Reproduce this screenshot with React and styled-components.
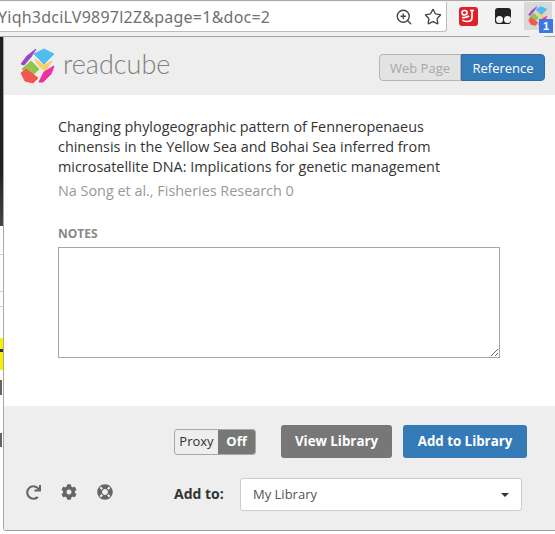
import styled, { createGlobalStyle } from "styled-components";
import { ZoomIn, Star } from "lucide-react";
import { FaRedo, FaCog, FaLifeRing } from "react-icons/fa";

const GlobalStyle = createGlobalStyle`
  html, body {
    margin: 0;
    padding: 0;
    background: #ffffff;
    overflow: hidden;
  }
  * {
    box-sizing: border-box;
  }
`;

function Logo({ size = 36 }) {
  return (
    <svg width={size} height={size} viewBox="0 0 36 36">
      <g strokeLinejoin="round" strokeWidth="1">
        <polygon points="1,16 7,8 16,1 11,9 4,17" fill="#9b45c6" stroke="#9b45c6" />
        <polygon points="14,6 24,1 34,6 24,16" fill="#4fbdf0" stroke="#4fbdf0" />
        <polygon points="15,11 24,17 32,13 25,23 18,17" fill="#f8d06a" stroke="#f8d06a" />
        <polygon points="2,21 11,13 19,21 11,29" fill="#93c452" stroke="#93c452" />
        <polygon points="1,25 6,21 18,30 13,35 5,33" fill="#f4574f" stroke="#f4574f" />
        <polygon points="19,34 24,24 34,18 31,26 23,34" fill="#ee2fa0" stroke="#ee2fa0" />
      </g>
    </svg>
  );
}

export default function App() {
  return (
    <Page>
      <GlobalStyle />
      <ChromeBar>
        <Omnibox>
          <Url>Yiqh3dciLV9897l2Z&amp;page=1&amp;doc=2</Url>
          <OmniIcons>
            <ZoomIn size={18} strokeWidth={1.8} />
            <Star size={18} strokeWidth={1.8} />
          </OmniIcons>
        </Omnibox>
        <Extensions>
          <Ext>
            <RedBadge>
              <svg width="16" height="16" viewBox="0 0 16 16" fill="none" stroke="#fff" strokeWidth="1.7">
                <path d="M2 4.5c0-1.5 1-2 2.5-2S7 3.2 7 4.6 6 7 4.4 7 2 6 2 4.5z" />
                <path d="M2 9.5c3 .5 5 0 7-1.500M10 2.500h4M12 2.500v7c0 2.500-2 4-5 4-2 0-3.500-.5-4.500-1.500" />
              </svg>
            </RedBadge>
          </Ext>
          <Ext>
            <BlackBadge>
              <Dot />
              <Dot />
            </BlackBadge>
          </Ext>
          <Ext $active>
            <Logo size={20} />
            <Count>1</Count>
          </Ext>
        </Extensions>
        <Notch />
      </ChromeBar>

      <Below>
        <Backdrop>
          <DarkBlock />
          <Rule $h={29} />
          <Rule $h={37} />
          <Rule $h={15} />
          <Rule $h={31} $plain />
          <Marker />
          <Rule $h={10} $plain />
          <Ink $h={15} />
          <Rule $h={38} $plain />
          <Ink $h={14} />
        </Backdrop>

        <Popup>
          <Header>
            <Brand>
              <Logo size={36} />
              <Wordmark>readcube</Wordmark>
            </Brand>
            <Segmented>
              <Segment>Web Page</Segment>
              <Segment $on>Reference</Segment>
            </Segmented>
          </Header>

          <Body>
            <Title>
              Changing phylogeographic pattern of Fenneropenaeus
              <br />
              chinensis in the Yellow Sea and Bohai Sea inferred from
              <br />
              microsatellite DNA: Implications for genetic management
            </Title>
            <Authors>Na Song et al., Fisheries Research 0</Authors>
            <NotesLabel>NOTES</NotesLabel>
            <Notes />
          </Body>

          <Footer>
            <ActionRow>
              <Proxy>
                <ProxyLabel>Proxy</ProxyLabel>
                <ProxyState>Off</ProxyState>
              </Proxy>
              <Button $tone="#777777" $w={111}>View Library</Button>
              <Button $tone="#337ab7" $w={124}>Add to Library</Button>
            </ActionRow>
            <BottomRow>
              <Tools>
                <FaRedo size={15} />
                <FaCog size={16} />
                <FaLifeRing size={16} />
              </Tools>
              <AddTo>Add to:</AddTo>
              <Select>
                My Library
                <Caret />
              </Select>
            </BottomRow>
          </Footer>
        </Popup>
      </Below>
    </Page>
  );
}

const Page = styled.div`
  width: 555px;
  height: 534px;
  display: flex;
  flex-direction: column;
  font-family: "Open Sans", "Liberation Sans", sans-serif;
  overflow: hidden;
`;

const ChromeBar = styled.div`
  position: relative;
  height: 37px;
  flex: none;
  display: flex;
  padding-top: 1px;
  background: #f2f2f2;
  border-top: 1px solid #a9a9a9;
  border-bottom: 1px solid #a5a5a5;
`;

const Omnibox = styled.div`
  width: 447px;
  height: 30px;
  flex: none;
  display: flex;
  align-items: center;
  justify-content: space-between;
  background: #ffffff;
  border: 1px solid #bdbdbd;
  border-left: none;
  border-top: none;
  border-radius: 0 0 3px 0;
`;

const Url = styled.span`
  margin-left: -2px;
  font-family: "Noto Sans", sans-serif;
  font-size: 16px;
  letter-spacing: 0.23px;
  color: #707070;
  white-space: nowrap;
`;

const OmniIcons = styled.div`
  display: flex;
  gap: 11px;
  padding-right: 4px;
  color: #444444;
`;

const Extensions = styled.div`
  display: flex;
  gap: 7px;
  padding: 0 1px 0 7px;
`;

const Ext = styled.div`
  position: relative;
  width: 28px;
  height: 28px;
  display: flex;
  align-items: center;
  justify-content: center;
  background: ${(p) => (p.$active ? "#d9d9d9" : "transparent")};
`;

const RedBadge = styled.div`
  width: 19px;
  height: 19px;
  display: flex;
  align-items: center;
  justify-content: center;
  border-radius: 3px;
  background: #e0202a;
`;

const BlackBadge = styled.div`
  width: 16px;
  height: 16px;
  display: flex;
  align-items: flex-end;
  justify-content: center;
  gap: 1px;
  padding-bottom: 1px;
  border-radius: 3px;
  background: #222222;
`;

const Dot = styled.span`
  width: 7px;
  height: 7px;
  border-radius: 50%;
  background: #f4f4f4;
`;

const Count = styled.span`
  position: absolute;
  right: -1px;
  bottom: -3px;
  width: 14px;
  height: 14px;
  font: bold 11px/14px "Liberation Sans", sans-serif;
  text-align: center;
  color: #ffffff;
  background: #3c78e0;
`;

const Notch = styled.span`
  position: absolute;
  right: 10px;
  bottom: -1px;
  width: 0;
  height: 0;
  border-left: 8px solid transparent;
  border-right: 8px solid transparent;
  border-bottom: 6px solid #eeeeee;
`;

const Below = styled.div`
  flex: 1;
  display: flex;
  min-height: 0;
`;

const Backdrop = styled.div`
  width: 3px;
  flex: none;
  display: flex;
  flex-direction: column;
  background: #ffffff;
`;

const DarkBlock = styled.div`
  height: 189px;
  background: linear-gradient(#1f1f1f, #1f1f1f 70%, #454545);
`;

const Rule = styled.div`
  height: ${(p) => p.$h}px;
  border-bottom: ${(p) => (p.$plain ? "none" : "1px solid #d0d0d0")};
`;

const Marker = styled.div`
  height: 32px;
  background: linear-gradient(#f7f000 35%, #333333 35%, #333333 45%, #f7f000 45%);
`;

const Ink = styled.div`
  width: 2px;
  height: ${(p) => p.$h}px;
  background: #6a625c;
`;

const Popup = styled.div`
  width: 552px;
  height: 494px;
  flex: none;
  display: flex;
  flex-direction: column;
  border-left: 1px solid #a8a8a8;
  border-bottom: 1px solid #9a9a9a;
  border-radius: 0 0 0 3px;
  background: #eeeeee;
`;

const Header = styled.div`
  height: 58px;
  flex: none;
  display: flex;
  align-items: center;
  justify-content: space-between;
  padding: 0 10px 0 16px;
  background: #eeeeee;
`;

const Brand = styled.div`
  display: flex;
  align-items: center;
  gap: 7px;
`;

const Wordmark = styled.span`
  margin-top: -5px;
  font-family: "Lato", sans-serif;
  font-weight: 300;
  font-size: 27px;
  line-height: 1;
  color: #808080;
`;

const Segmented = styled.div`
  display: flex;
  height: 27px;
  margin-top: 3px;
`;

const Segment = styled.div`
  width: ${(p) => (p.$on ? 84 : 82)}px;
  display: flex;
  align-items: center;
  justify-content: center;
  font-size: 13px;
  color: ${(p) => (p.$on ? "#ffffff" : "#a8a8a8")};
  background: ${(p) => (p.$on ? "#337ab7" : "#e3e3e3")};
  border: 1px solid ${(p) => (p.$on ? "#2e6da4" : "#b5b5b5")};
  border-radius: ${(p) => (p.$on ? "0 4px 4px 0" : "4px 0 0 4px")};
`;

const Body = styled.div`
  height: 311px;
  flex: none;
  padding: 22px 54px 0 54px;
  background: #ffffff;
`;

const Title = styled.div`
  font-size: 14.4px;
  line-height: 20px;
  color: #333333;
  white-space: nowrap;
`;

const Authors = styled.div`
  margin-top: 4px;
  font-size: 14.4px;
  line-height: 20px;
  color: #999999;
`;

const NotesLabel = styled.div`
  margin-top: 23px;
  font-size: 12px;
  font-weight: 700;
  line-height: 20px;
  color: #888888;
`;

const Notes = styled.textarea`
  display: block;
  width: 442px;
  height: 111px;
  margin-top: 3px;
  border: 1px solid #a6a6a6;
  border-radius: 0;
  background: #ffffff;
  outline: none;
`;

const Footer = styled.div`
  flex: 1;
  display: flex;
  flex-direction: column;
  background: #eeeeee;
`;

const ActionRow = styled.div`
  display: flex;
  align-items: center;
  height: 33px;
  margin-top: 19px;
  padding-left: 170px;
`;

const Proxy = styled.div`
  display: flex;
  width: 82px;
  height: 26px;
  margin-right: 25px;
  border: 1px solid #a8a8a8;
  border-radius: 3px;
  overflow: hidden;
  font-size: 13px;
  line-height: 23px;
`;

const ProxyLabel = styled.span`
  flex: 1;
  text-align: center;
  color: #333333;
`;

const ProxyState = styled.span`
  width: 37px;
  text-align: center;
  font-weight: 700;
  color: #ffffff;
  background: #777777;
`;

const Button = styled.button`
  width: ${(p) => p.$w}px;
  height: 33px;
  margin-right: 11px;
  padding: 0 0 2px;
  border: none;
  border-radius: 3px;
  font-family: inherit;
  font-size: 13.3px;
  font-weight: 700;
  color: #ffffff;
  background: ${(p) => p.$tone};
`;

const BottomRow = styled.div`
  display: flex;
  align-items: center;
  margin-top: 20px;
  height: 33px;
`;

const Tools = styled.div`
  width: 170px;
  flex: none;
  display: flex;
  align-items: center;
  gap: 20px;
  padding: 0 0 5px 22px;
  color: #666666;
`;

const AddTo = styled.span`
  width: 66px;
  flex: none;
  padding-bottom: 2px;
  font-size: 14px;
  font-weight: 700;
  color: #333333;
`;

const Select = styled.div`
  width: 282px;
  height: 33px;
  display: flex;
  align-items: center;
  justify-content: space-between;
  padding: 0 12px 2px;
  font-size: 13px;
  color: #555555;
  background: #ffffff;
  border: 1px solid #cccccc;
  border-radius: 3px;
`;

const Caret = styled.span`
  margin-top: 2px;
  width: 0;
  height: 0;
  border-left: 4px solid transparent;
  border-right: 4px solid transparent;
  border-top: 4px solid #333333;
`;
